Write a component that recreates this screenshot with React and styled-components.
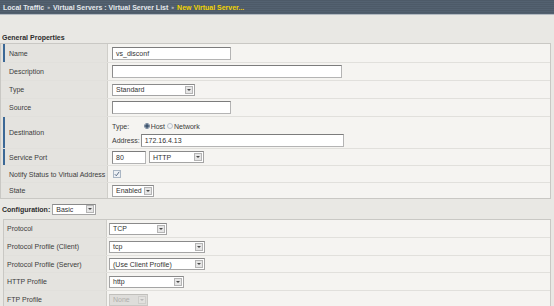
import React from "react";
import styled, { createGlobalStyle } from "styled-components";

const GlobalStyle = createGlobalStyle`
  html, body { margin: 0; padding: 0; background: #e9e8e4; }
  body {
    width: 554px; height: 306px; overflow: hidden;
    font-family: "Liberation Sans", Arial, sans-serif;
    font-size: 7px; color: #3a3a3a;
  }
  * { box-sizing: border-box; }
`;

const Header = styled.div`
  height: 15px;
  background: repeating-linear-gradient(180deg, #4d5a68 0 1px, #536170 1px 2px);
  border-bottom: 1px solid #b3bac1;
  display: flex;
  align-items: center;
  padding-left: 3px;
  font-weight: bold;
  color: #e4e8ec;
  white-space: nowrap;
`;

const Crumb = styled.span`
  color: ${(p) => (p.$current ? "#f2d400" : "#e4e8ec")};
`;

const Sep = styled.span`
  font-size: 5px;
  color: #c4cad0;
  margin: 0 3px;
`;

const SectionTitle = styled.div`
  margin-top: 17px;
  height: 11px;
  line-height: 11px;
  padding-left: 2px;
  font-weight: bold;
  color: #2e2e2e;
`;

const Table = styled.div`
  margin: 0 3px 0 ${(p) => p.$left}px;
  border: 1px solid #c9c8c4;
  background: #f5f4f1;
`;

const Row = styled.div`
  display: grid;
  grid-template-columns: ${(p) => p.$labelW}px 1fr;
  height: ${(p) => p.$h}px;
  border-top: ${(p) => (p.$first ? "none" : "1px solid #e1e0dc")};
`;

const Label = styled.div`
  display: flex;
  align-items: center;
  padding-left: ${(p) => p.$pad}px;
  border-right: 1px solid #cfcec9;
  background: ${(p) =>
    p.$req
      ? "linear-gradient(90deg, #e4e3df 2px, #3b6896 2px, #3b6896 4px, #e4e3df 4px)"
      : "#e4e3df"};
  color: #3c3c3c;
  white-space: nowrap;
`;

const Value = styled.div`
  display: flex;
  align-items: center;
  gap: 3px;
  padding-left: ${(p) => p.$pad}px;
`;

const TextField = styled.div`
  width: ${(p) => p.$w}px;
  height: 13px;
  display: flex;
  align-items: center;
  padding: 0 3px;
  border: 1px solid #b4b4b4;
  border-top-color: #7c7c7c;
  border-left-color: #8c8c8c;
  background: #fff;
  color: #333;
  white-space: nowrap;
`;

const SelectBox = styled.div`
  width: ${(p) => p.$w}px;
  height: ${(p) => p.$h || 12}px;
  display: flex;
  align-items: center;
  justify-content: space-between;
  padding: 0 1px 0 3px;
  border: 1px solid ${(p) => (p.$disabled ? "#c9c8c4" : "#a4a4a4")};
  border-top-color: ${(p) => (p.$disabled ? "#c0bfbb" : "#8a8a8a")};
  background: ${(p) => (p.$disabled ? "#dedddA" : "#fff")};
  color: ${(p) => (p.$disabled ? "#b0afab" : "#333")};
  white-space: nowrap;
`;

const Arrow = styled.span`
  width: 8px;
  height: 8px;
  display: flex;
  align-items: center;
  justify-content: center;
  border: 1px solid ${(p) => (p.$disabled ? "#cfcecb" : "#b5b5b5")};
  background: ${(p) => (p.$disabled ? "#e2e1de" : "#e6e6e6")};
  &::after {
    content: "";
    border-left: 2px solid transparent;
    border-right: 2px solid transparent;
    border-top: 2px solid ${(p) => (p.$disabled ? "#b8b8b8" : "#4a4a4a")};
  }
`;

const Select = ({ w, h, children, disabled }) => (
  <SelectBox $w={w} $h={h} $disabled={disabled}>
    <span>{children}</span>
    <Arrow $disabled={disabled} />
  </SelectBox>
);

const DestGrid = styled.div`
  display: grid;
  grid-template-columns: auto auto;
  grid-template-rows: 13px 13px;
  column-gap: 1px;
  row-gap: 1px;
  align-items: center;
  padding-top: 1px;
`;

const RadioGroup = styled.div`
  display: flex;
  align-items: center;
  gap: 1px;
  padding-left: 3px;
`;

const Radio = styled.span`
  width: 6px;
  height: 6px;
  border-radius: 50%;
  border: 1px solid ${(p) => (p.$on ? "#6d7f95" : "#b9c1cb")};
  background: ${(p) =>
    p.$on ? "radial-gradient(circle, #3f556f 0 1.5px, #dfe5ec 2px)" : "#f1f3f6"};
  margin-left: ${(p) => (p.$gapLeft ? 1 : 0)}px;
`;

const Checkbox = styled.span`
  width: 8px;
  height: 8px;
  display: flex;
  align-items: center;
  justify-content: center;
  margin-left: 1px;
  border: 1px solid #aab6c4;
  background: #eef1f5;
`;

const ConfigBar = styled.div`
  height: 20px;
  display: flex;
  align-items: center;
  padding-left: 2px;
  gap: 2px;
`;

const Bold = styled.span`
  font-weight: bold;
  color: #2e2e2e;
`;

const general = [
  { label: "Name", h: 18, req: true, first: true, content: <TextField $w={119}>vs_disconf</TextField> },
  { label: "Description", h: 18, content: <TextField $w={230} /> },
  { label: "Type", h: 18, content: <Select w={83}>Standard</Select> },
  { label: "Source", h: 18, content: <TextField $w={119} /> },
  {
    label: "Destination",
    h: 32,
    req: true,
    content: (
      <DestGrid>
        <span>Type:</span>
        <RadioGroup>
          <Radio $on />
          <span>Host</span>
          <Radio $gapLeft />
          <span>Network</span>
        </RadioGroup>
        <span>Address:</span>
        <TextField $w={203}>172.16.4.13</TextField>
      </DestGrid>
    ),
  },
  {
    label: "Service Port",
    h: 17,
    req: true,
    content: (
      <>
        <TextField $w={34}>80</TextField>
        <Select w={55}>HTTP</Select>
      </>
    ),
  },
  {
    label: "Notify Status to Virtual Address",
    h: 17,
    content: (
      <Checkbox>
        <svg width="6" height="6" viewBox="0 0 6 6">
          <path d="M0.8 3.2 L2.3 4.8 L5.2 0.8" fill="none" stroke="#5d7089" strokeWidth="1" />
        </svg>
      </Checkbox>
    ),
  },
  { label: "State", h: 16, content: <Select w={42}>Enabled</Select> },
];

const config = [
  { label: "Protocol", h: 17, first: true, content: <Select w={58}>TCP</Select> },
  { label: "Protocol Profile (Client)", h: 18, content: <Select w={96}>tcp</Select> },
  { label: "Protocol Profile (Server)", h: 17, content: <Select w={96}>(Use Client Profile)</Select> },
  { label: "HTTP Profile", h: 18, content: <Select w={75}>http</Select> },
  { label: "FTP Profile", h: 18, content: <Select w={39} disabled>None</Select> },
];

export default function App() {
  return (
    <>
      <GlobalStyle />
      <Header>
        <Crumb>Local Traffic</Crumb>
        <Sep>»</Sep>
        <Crumb>Virtual Servers : Virtual Server List</Crumb>
        <Sep>»</Sep>
        <Crumb $current>New Virtual Server...</Crumb>
      </Header>
      <SectionTitle>General Properties</SectionTitle>
      <Table $left={0}>
        {general.map((r) => (
          <Row key={r.label} $labelW={107} $h={r.h} $first={r.first}>
            <Label $pad={8} $req={r.req}>{r.label}</Label>
            <Value $pad={4}>{r.content}</Value>
          </Row>
        ))}
      </Table>
      <ConfigBar>
        <Bold>Configuration:</Bold>
        <Select w={44} h={11}>Basic</Select>
      </ConfigBar>
      <Table $left={3}>
        {config.map((r) => (
          <Row key={r.label} $labelW={103} $h={r.h} $first={r.first}>
            <Label $pad={3}>{r.label}</Label>
            <Value $pad={2}>{r.content}</Value>
          </Row>
        ))}
      </Table>
    </>
  );
}
